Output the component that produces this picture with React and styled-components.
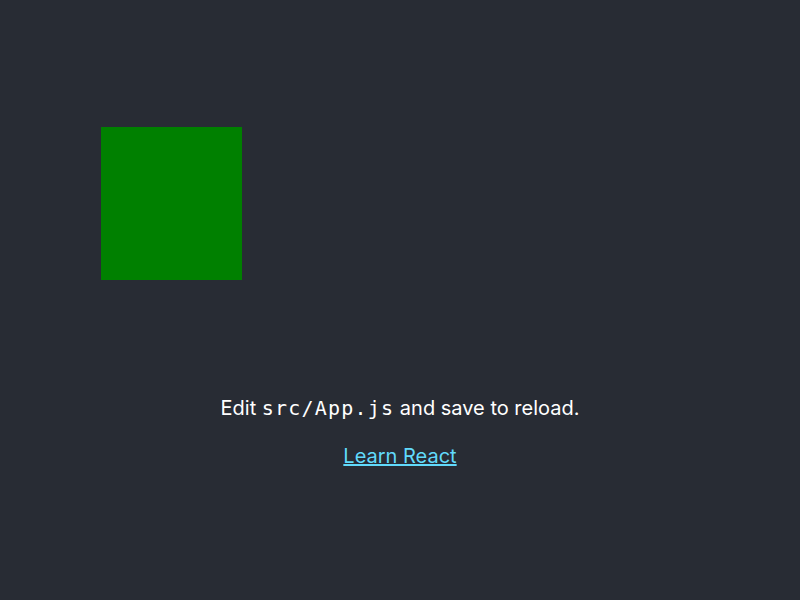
import React from "react";
import styled, { createGlobalStyle } from "styled-components";

const GlobalStyle = createGlobalStyle`
  body {
    margin: 0;
    font-family: Inter, "Noto Sans", sans-serif;
    background: #282c34;
  }
`;

const Header = styled.header`
  min-height: 100vh;
  display: flex;
  flex-direction: column;
  justify-content: center;
  align-items: center;
  color: #ffffff;
  font-size: 20px;
`;

const Logo = styled.div`
  align-self: flex-start;
  margin-left: 101px;
  width: 141px;
  height: 153px;
  background: green;
`;

const Text = styled.p`
  margin: 116px 0 24px;
  line-height: 24px;
`;

const Code = styled.code`
  font-family: "DejaVu Sans Mono", monospace;
  letter-spacing: 1.2px;
`;

const Link = styled.a`
  color: #61dafb;
  line-height: 24px;
  margin-bottom: 5px;
`;

function App() {
  return (
    <>
      <GlobalStyle />
      <Header>
        <Logo />
        <Text>
          Edit <Code>src/App.js</Code> and save to reload.
        </Text>
        <Link href="#" rel="noopener noreferrer">
          Learn React
        </Link>
      </Header>
    </>
  );
}

export default App;
